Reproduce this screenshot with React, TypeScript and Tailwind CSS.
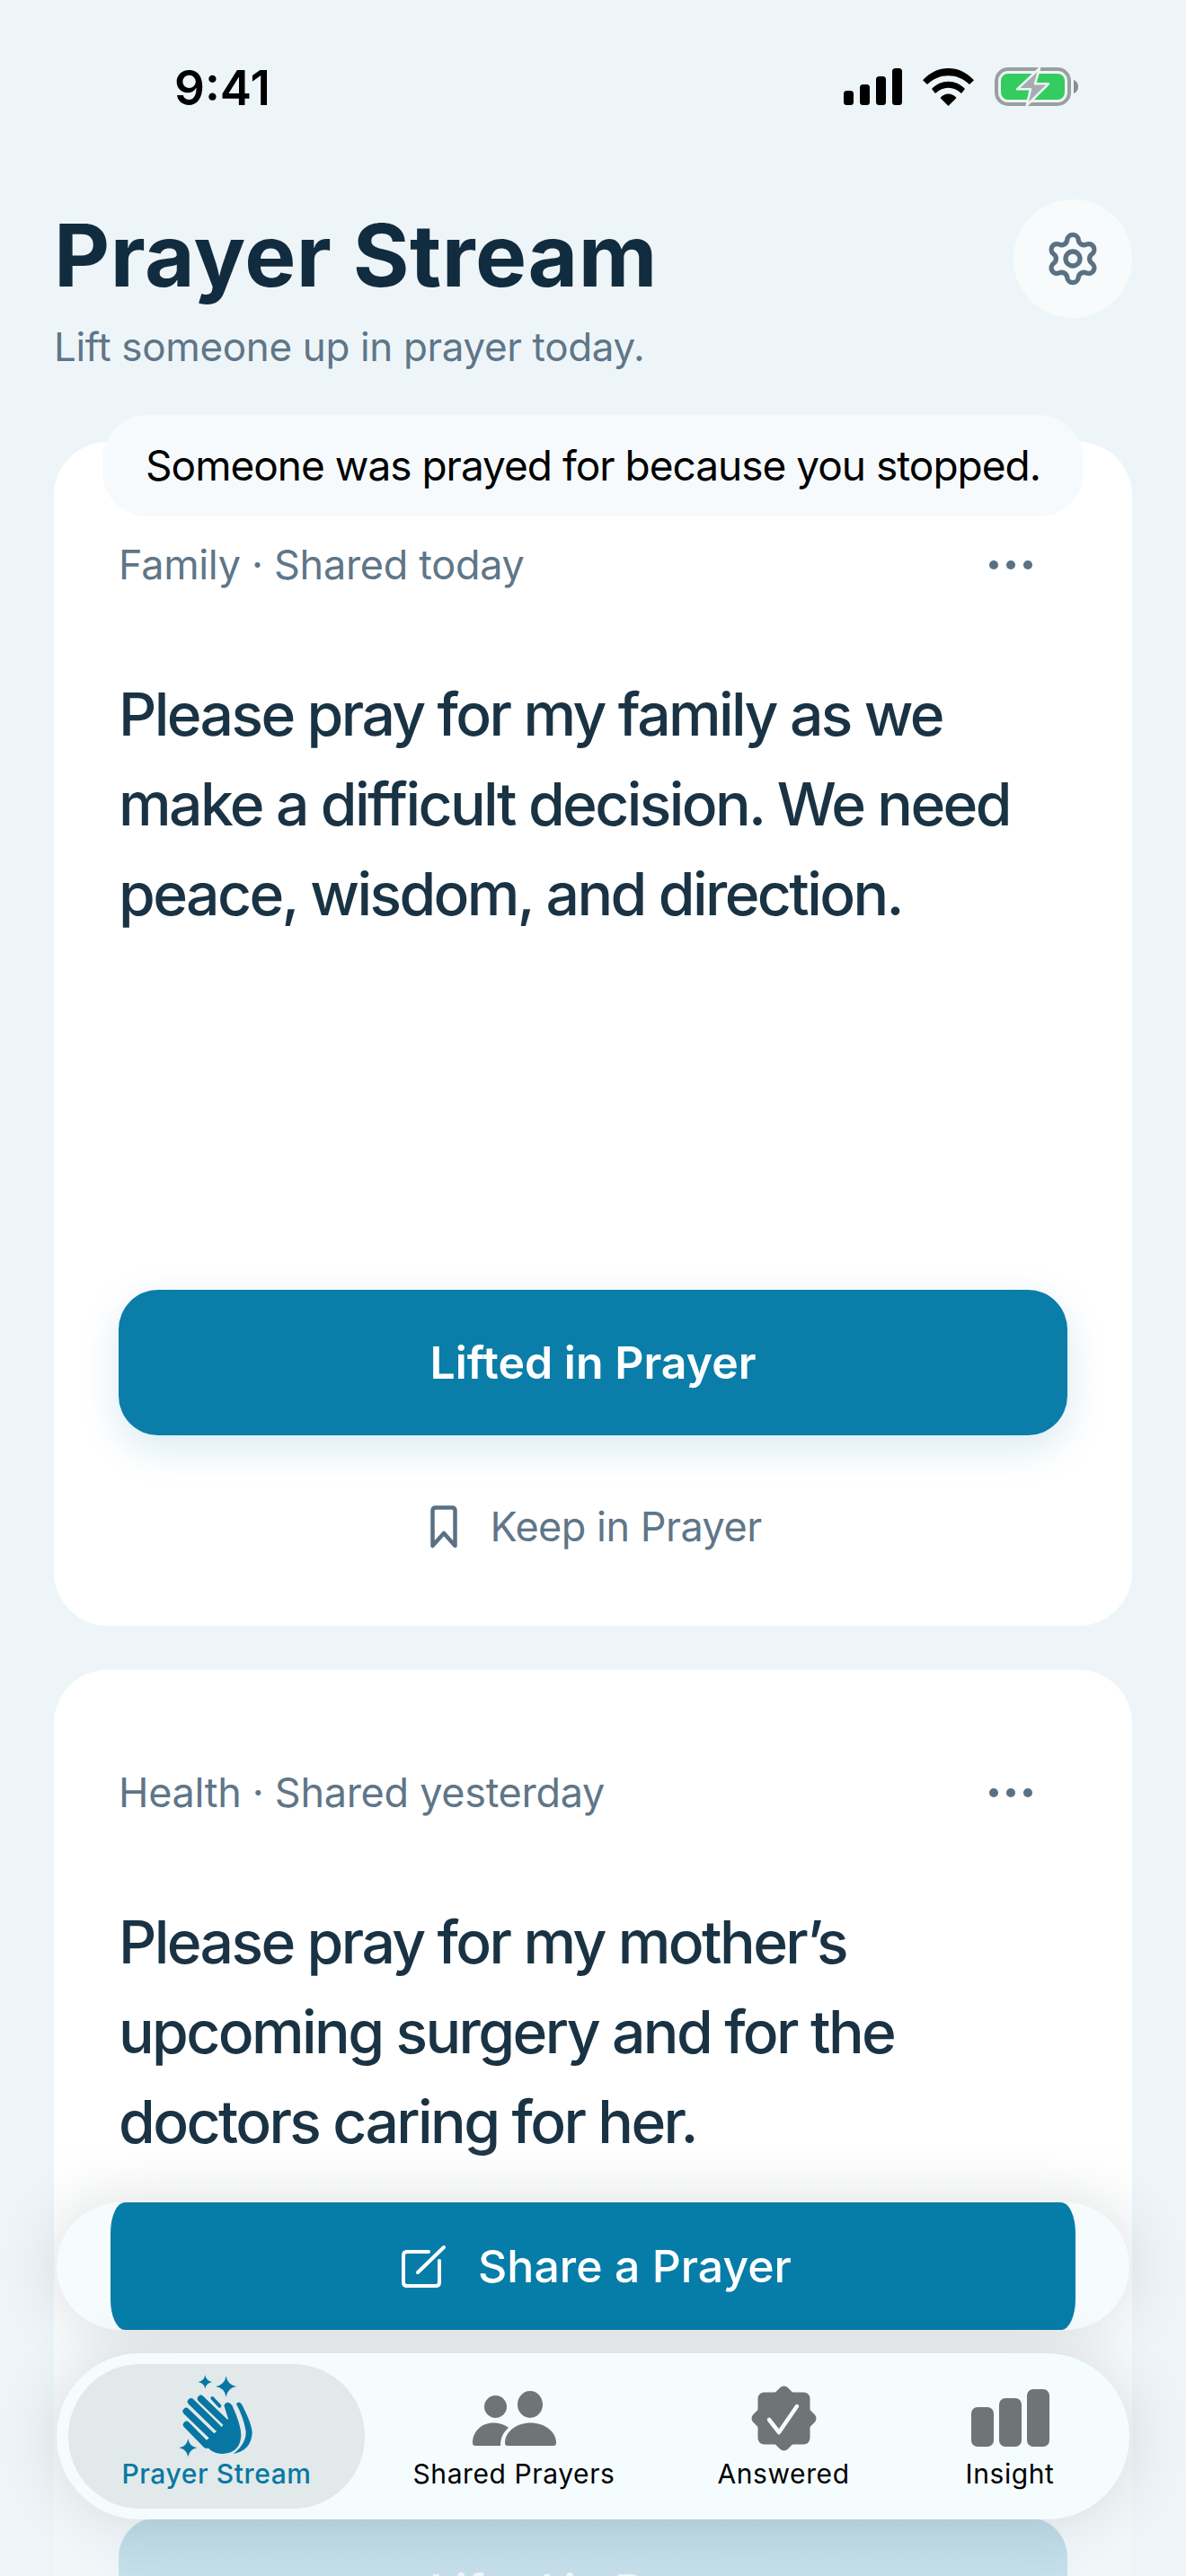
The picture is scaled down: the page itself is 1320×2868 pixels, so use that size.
import { Settings } from 'lucide-react';

interface Prayer {
  meta: string;
  lines: string[];
}

const prayers: Prayer[] = [
  { meta: 'Family · Shared today', lines: ['Please pray for my family as we', 'make a difficult decision. We need', 'peace, wisdom, and direction.'] },
  { meta: 'Health · Shared yesterday', lines: ['Please pray for my mother’s', 'upcoming surgery and for the', 'doctors caring for her.'] },
];

function StatusIcons() {
  return (
    <div className="flex items-center">
      <svg width="65" height="41" viewBox="0 0 65 41" fill="#000">
        <rect x="0" y="25" width="11" height="16" rx="3.5" />
        <rect x="18" y="18" width="11" height="23" rx="3.5" />
        <rect x="36" y="9" width="11" height="32" rx="3.5" />
        <rect x="54" y="0" width="11" height="41" rx="3.5" />
      </svg>
      <svg className="ml-[23px]" width="57" height="42" viewBox="0 0 57 42" fill="#000">
        <path d="M0 13.3C16 -4.4 41 -4.4 57 13.3L52 18C38.500 5 18.500 5 5 18Z" />
        <path d="M10 23C20 12 37 12 47 23L43 28C34 19.500 23 19.500 14 28Z" />
        <path d="M19.500 33C24 27 33 27 37.500 33L28.500 42Z" />
      </svg>
      <svg className="ml-[23px]" width="93" height="43" viewBox="0 0 93 43">
        <rect x="2" y="2" width="81" height="39" rx="13" fill="none" stroke="#9A9FA0" strokeWidth="4" />
        <rect x="7" y="7" width="71" height="29" rx="8" fill="#34CC5E" />
        <path d="M88 14C91 15 93 18 93 21.500C93 25 91 28 88 29Z" fill="#8A8E8F" />
        <path d="M50 1L25 24.300H40L35.700 42.500L60 18.300H45Z" fill="#A7ACAE" stroke="#EEF5F8" strokeWidth="2.500" strokeLinejoin="round" />
      </svg>
    </div>
  );
}

function Dots() {
  return (
    <svg width="48" height="10" viewBox="0 0 48 10" fill="#5A7184">
      <circle cx="5" cy="5" r="5" />
      <circle cx="24" cy="5" r="5" />
      <circle cx="43" cy="5" r="5" />
    </svg>
  );
}

function BookmarkIcon() {
  return (
    <svg width="30" height="48" viewBox="0 0 30 48" fill="none" stroke="#5A7184" strokeWidth="4.5" strokeLinejoin="round">
      <path d="M2.500 6Q2.500 2.500 6 2.500H24Q27.500 2.500 27.500 6V45L15 31L2.500 45Z" />
    </svg>
  );
}

function star(cx: number, cy: number, r: number) {
  const k = r * 0.14;
  return `M${cx} ${cy - r}Q${cx + k} ${cy - k} ${cx + r} ${cy}Q${cx + k} ${cy + k} ${cx} ${cy + r}Q${cx - k} ${cy + k} ${cx - r} ${cy}Q${cx - k} ${cy - k} ${cx} ${cy - r}Z`;
}

function HandsIcon() {
  return (
    <svg className="mb-[5px]" width="84" height="96" viewBox="180 62 252 288" fill="#0876A3">
      <path d={star(268, 92, 23)} />
      <path d={star(338, 107, 35)} />
      <path d={star(211, 312, 30)} />
      <g stroke="#0876A3" strokeWidth="23" strokeLinecap="round" fill="none">
        <path d="M206 235L272 302" />
        <path d="M205 190L290 272" />
        <path d="M221 158L310 245" />
        <path d="M254 148L335 226" />
        <path d="M292 146L316 172" strokeWidth="12" />
      </g>
      <path d="M262 296L300 262L325 240L345 215L331 170Q342 150 358 170Q388 235 388 270Q385 332 322 332Q290 332 262 296Z" />
      <path d="M372 165Q382 152 392 170Q425 235 425 262Q422 320 362 332Q405 300 404 258Q398 215 372 165Z" />
    </svg>
  );
}

function PeopleIcon() {
  return (
    <svg width="93" height="61" viewBox="0 0 93 61" fill="#6F7475">
      <circle cx="25.500" cy="17.500" r="12.500" />
      <ellipse cx="64" cy="15" rx="14" ry="15" />
      <path d="M0 58C0 45 10 35.500 23 35.500C29 35.500 35 37 40 41C34 46 31 52 31 61H3Q0 61 0 58Z" />
      <path d="M36 58C36 45 49 35.500 64.500 35.500C80 35.500 93 45 93 58Q93 61 90 61H39Q36 61 36 58Z" />
    </svg>
  );
}

function BadgeIcon() {
  return (
    <svg width="77" height="77" viewBox="0 0 77 77" fill="#6F7475">
      <rect x="9.500" y="9.500" width="58" height="58" rx="7" />
      <rect x="11.300" y="11.300" width="54.400" height="54.400" rx="6" transform="rotate(45 38.500 38.500)" />
      <path d="M22 40L33 54L53 25" fill="none" stroke="#F5FCFE" strokeWidth="4.500" strokeLinecap="round" strokeLinejoin="round" />
    </svg>
  );
}

function BarsIcon() {
  return (
    <svg width="87" height="64" viewBox="0 0 87 64" fill="#6F7475">
      <rect x="0" y="20" width="25" height="44" rx="7" />
      <rect x="31" y="10" width="25" height="54" rx="7" />
      <rect x="62" y="0" width="25" height="64" rx="7" />
    </svg>
  );
}

function ShareIcon() {
  return (
    <svg width="50" height="48" viewBox="0 0 50 48" fill="none" stroke="#fff" strokeLinecap="round" strokeLinejoin="round">
      <path d="M30 8H6Q2 8 2 12V42Q2 46 6 46H38Q42 46 42 42V18" strokeWidth="4" />
      <path d="M47 3L18 31" strokeWidth="4" />
    </svg>
  );
}

function PrayerCard({ prayer, toast }: { prayer: Prayer; toast?: string }) {
  return (
    <div className="relative mx-[60px] mb-[49px] flex h-[1318px] shrink-0 flex-col rounded-[60px] bg-white px-[72px] pt-[111px] pb-[84px]">
      {toast && (
        <div className="absolute -top-[30px] left-[54px] right-[54px] flex h-[113px] items-center justify-center rounded-[50px] bg-[#F6FAFC] text-[46px] tracking-[-1px] text-black">
          {toast}
        </div>
      )}
      <div className="flex items-center justify-between">
        <span className="text-[45px] leading-[52px] tracking-[-0.3px] text-[#5F7688]">{prayer.meta}</span>
        <span className="mr-[39px]"><Dots /></span>
      </div>
      <div className="mt-[90px] whitespace-nowrap text-[66px] font-medium leading-[100px] tracking-[-2.6px] text-[#1A3344]">
        {prayer.lines.map((line) => (
          <div key={line}>{line}</div>
        ))}
      </div>
      <button className="mt-auto h-[162px] rounded-[44px] bg-[#0A7EA8] text-[50px] font-semibold text-white shadow-[0_14px_44px_rgba(10,126,168,0.16)]">
        Lifted in Prayer
      </button>
      <div className="ml-[7px] mt-[76px] flex h-[52px] items-center justify-center gap-[36px] text-[45px] tracking-[-0.5px] text-[#5F7688]">
        <BookmarkIcon />
        <span>Keep in Prayer</span>
      </div>
    </div>
  );
}

export default function App() {
  return (
    <div className="relative flex h-[2868px] w-[1320px] flex-col overflow-hidden bg-[#EEF5F8] [font-family:Inter,sans-serif]">
      <div className="flex h-[222px] shrink-0 items-start justify-between pl-[194px] pr-[120px] pt-[75px]">
        <span className="text-[53px] font-semibold leading-[46px] text-black">9:41</span>
        <StatusIcons />
      </div>

      <div className="mb-[80px] flex shrink-0 items-start justify-between px-[60px]">
        <div className="pt-[6px]">
          <h1 className="text-[96px] font-bold leading-[112px] tracking-[0.5px] text-[#122C3F]">Prayer Stream</h1>
          <p className="mt-[20px] text-[44px] leading-[52px] tracking-[-0.35px] text-[#5F7688]">Lift someone up in prayer today.</p>
        </div>
        <button className="flex h-[132px] w-[132px] items-center justify-center rounded-full bg-[#F7FBFC]">
          <Settings size={64} color="#5A7184" strokeWidth={2} />
        </button>
      </div>

      <PrayerCard prayer={prayers[0]} toast="Someone was prayed for because you stopped." />
      <PrayerCard prayer={prayers[1]} />

      {/* Bottom dock floats over the stream and fades whatever scrolls under it */}
      <div className="absolute inset-x-0 bottom-0 flex h-[488px] flex-col justify-end bg-gradient-to-b from-[#EEF5F8]/0 via-[#EEF5F8]/78 via-85% to-[#EEF5F8]/82 px-[63px] pb-[63px]">
        <div className="flex h-[142px] rounded-full bg-[#F6FBFD] px-[60px] shadow-[0_0_70px_rgba(0,0,0,0.12)]">
          <button className="flex h-full w-full items-center justify-center gap-[35px] rounded-[16px_/_34px] bg-[#067DA9] pl-[8px] text-[50px] font-medium text-white">
            <ShareIcon />
            <span>Share a Prayer</span>
          </button>
        </div>
        <div className="mt-[26px] flex h-[185px] rounded-full bg-[#F5FCFE] pl-[13px] pt-[12px] shadow-[0_0_70px_rgba(0,0,0,0.12)]">
          <div className="flex h-[161px] w-[330px] flex-col items-center rounded-[80px] bg-[#E2E9EB] pt-[12px]">
            <div className="flex h-[96px] items-center justify-center"><HandsIcon /></div>
            <span className="text-[30px] font-medium leading-[28px] tracking-[0.6px] text-[#0878A4]">Prayer Stream</span>
          </div>
          <div className="flex h-[161px] w-[332px] flex-col items-center pt-[12px]">
            <div className="flex h-[96px] items-center justify-center"><PeopleIcon /></div>
            <span className="text-[30px] leading-[28px] tracking-[0.6px] text-black">Shared Prayers</span>
          </div>
          <div className="flex h-[161px] w-[268px] flex-col items-center pt-[12px]">
            <div className="flex h-[96px] items-center justify-center"><BadgeIcon /></div>
            <span className="text-[30px] leading-[28px] tracking-[0.6px] text-black">Answered</span>
          </div>
          <div className="flex h-[161px] w-[236px] flex-col items-center pt-[12px]">
            <div className="flex h-[96px] items-center justify-center"><BarsIcon /></div>
            <span className="text-[30px] leading-[28px] tracking-[0.6px] text-black">Insight</span>
          </div>
        </div>
      </div>
    </div>
  );
}
